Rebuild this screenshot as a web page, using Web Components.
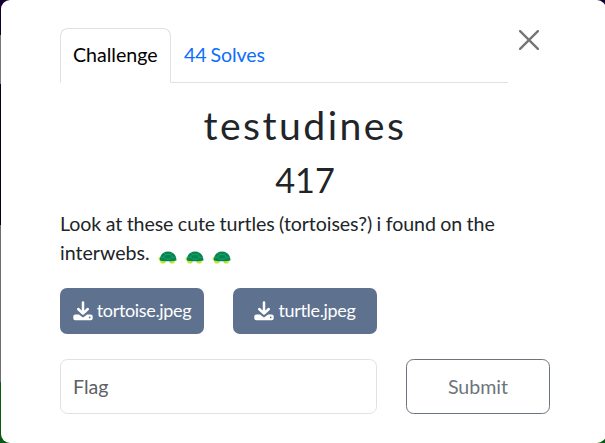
<!DOCTYPE html>
<html lang="en">
<head>
<meta charset="utf-8">
<title>Challenge</title>
<style>
html,body{margin:0;width:605px;height:443px;overflow:hidden}
body{font-family:Lato,"Liberation Sans",sans-serif;font-size:19.6px;line-height:29.4px;color:#212529;
background:linear-gradient(#11002f 0 35px,#777 35px 84px,#080016 84px 225px,#6d6d6d 225px 382px,#075b12 382px)}
</style>
</head>
<body>
<challenge-modal></challenge-modal>
<script>
function define(name, html){
  customElements.define(name, class extends HTMLElement{
    constructor(){
      super();
      const t=document.createElement('template');
      t.innerHTML=html;
      this.attachShadow({mode:'open'}).append(t.content.cloneNode(true));
    }
  });
}

define('tab-item',`<style>
:host{display:block;box-sizing:border-box;height:55px;padding:11px 12px 0;border:1px solid transparent;color:#0d6efd;white-space:nowrap;word-spacing:-1px;letter-spacing:-.08px}
:host([active]){width:111px;color:#000;background:#fff;border-color:#dee2e6 #dee2e6 #fff;border-radius:8px 8px 0 0;letter-spacing:0}
</style><slot></slot>`);

define('tab-bar',`<style>
:host{display:flex;width:448px;height:55px;box-sizing:border-box;border-bottom:1px solid #dee2e6}
</style><slot></slot>`);

define('close-button',`<style>
:host{display:block;width:20px;height:20px}svg{display:block}
</style><svg width="20" height="20" viewBox="0 0 20 20"><path d="M1.1 1.1 18.9 18.9M18.9 1.1 1.1 18.9" stroke="#757575" stroke-width="2.300" stroke-linecap="round"/></svg>`);

define('turtle-icon',`<style>
:host{display:inline-block;width:20px;height:13px;margin-right:7px;vertical-align:-4px}svg{display:block}
</style><svg width="20" height="13" viewBox="0 0 20 13">
<path d="M3 6C1.300 5.700.4 6.700.6 8c.2 1.300 1.500 1.800 3 1.600h13.500l1.300-1.100" fill="#b6e31c"/>
<path d="M2.300 9.500h5.200V11c0 1-.7 1.400-1.500 1.400H4c-1 0-1.700-.5-1.700-1.400zM11.500 9.500h5.200V11c0 1-.7 1.400-1.500 1.400h-2c-1 0-1.700-.5-1.700-1.400z" fill="#bde82b"/>
<path d="M1.800 9.600C2 3.700 5 .5 10 .5s8.300 3.200 8.500 9.100c-1.800.9-14.800 1-16.700 0z" fill="#058455"/>
<path d="M7.500 3.500h5l1.800 2.600-1.700 2H7.400l-1.700-2zM5.700 6.100l-3 .6M14.300 6.100l3 .6M7.500 3.500 6.300 2.200M12.500 3.500l1.200-1.300" fill="none" stroke="#18a75d" stroke-width=".9"/>
</svg>`);

define('file-button',`<style>
:host{display:flex;box-sizing:border-box;width:144px;height:46px;border-radius:7px;background:#5e728f;color:#fff;align-items:center;justify-content:center;gap:4px;font-size:18px;letter-spacing:-.340px;white-space:nowrap}
svg{display:block;width:20px;height:20px;flex:none}
</style><svg viewBox="0 0 20 20"><path d="M10 1.500v11M5.200 8 10 12.700 14.800 8" fill="none" stroke="#fff" stroke-width="2.500" stroke-linecap="round" stroke-linejoin="round"/><path d="M2.300 13.500h3.600L10 16.600l4.100-3.100h3.600c1.200 0 2 .8 2 2v1.800c0 1.200-.8 2-2 2H2.300c-1.200 0-2-.8-2-2v-1.800c0-1.200.8-2 2-2z" fill="#fff"/><circle cx="16.700" cy="16.400" r=".85" fill="#5e728f"/></svg><span><slot></slot></span>`);

define('flag-field',`<style>
:host{display:flex;box-sizing:border-box;width:317px;height:55px;align-items:center;padding:0 12px;border:1px solid #dee2e6;border-radius:7.500px;color:#5d6165}
</style><slot></slot>`);

define('submit-button',`<style>
:host{display:flex;box-sizing:border-box;width:144px;height:55px;align-items:center;justify-content:center;border:1px solid #6c757d;border-radius:7.500px;color:#6c757d}
</style><slot></slot>`);

define('challenge-modal',`<style>
:host{display:block;box-sizing:border-box;width:605px;height:443px;margin-left:1.300px;padding:28px 0 0 58.700px;background:#fff;border-radius:9px}
header{display:flex;gap:11px;height:54px}
close-button{margin-top:2px}
main{width:490px}
h2{margin:0;font-weight:400;font-size:39.200px;line-height:47px;text-align:center}
.name{margin-top:19px;letter-spacing:2.450px}
.value{margin-top:8px;font-size:34.300px}
p{margin:6px 0 0;height:59px}
.tight{letter-spacing:-.08px;word-spacing:-.45px}
turtle-icon:first-of-type{margin-left:3px}
.row{display:flex;gap:29px}
.files{margin-top:20px}
.entry{margin-top:25px}
</style>
<header><tab-bar><tab-item active>Challenge</tab-item><tab-item>44 Solves</tab-item></tab-bar><close-button></close-button></header>
<main>
<h2 class="name">testudines</h2>
<h2 class="value">417</h2>
<p><span class="tight">Look at these cute turtles (tortoises?) i found on the</span> interwebs. <turtle-icon></turtle-icon><turtle-icon></turtle-icon><turtle-icon></turtle-icon></p>
<div class="row files"><file-button>tortoise.jpeg</file-button><file-button>turtle.jpeg</file-button></div>
<div class="row entry"><flag-field>Flag</flag-field><submit-button>Submit</submit-button></div>
</main>`);
</script>
</body>
</html>
